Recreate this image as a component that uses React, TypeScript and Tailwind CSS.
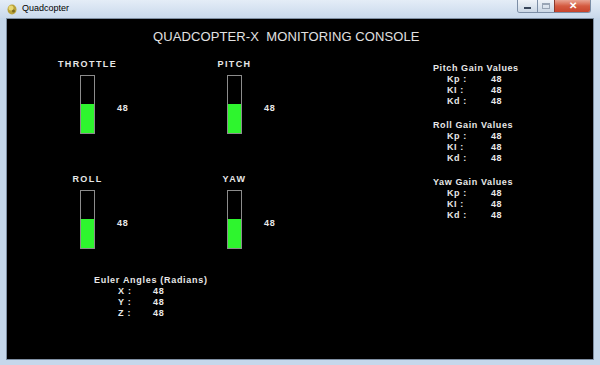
import React from "react";

const font = { fontFamily: '"Liberation Sans", Arial, sans-serif' };

function TitleBar() {
  return (
    <div className="flex h-[18px] items-start bg-gradient-to-b from-[#e4edf7] to-[#c9d9ec]">
      <div className="flex h-[18px] items-center pl-[7px]">
        <svg width="10" height="11" viewBox="0 0 10 11">
          <ellipse cx="5" cy="5.5" rx="4.5" ry="5" fill="#b9a23a" />
          <ellipse cx="4" cy="4" rx="2.5" ry="2.5" fill="#e8d873" />
          <circle cx="6.5" cy="7" r="1.5" fill="#7a6a20" />
        </svg>
        <span className="ml-[5px] text-[9px] text-black">Quadcopter</span>
      </div>
      <div className="ml-auto mr-[9px] flex h-[13px] overflow-hidden rounded-b-[3px] border border-t-0 border-[#7c8ea6]">
        <div className="flex w-[19px] items-center justify-center bg-gradient-to-b from-[#f0f4f9] to-[#cbd7e5]">
          <div className="mt-[4px] h-[2px] w-[7px] border border-[#38465a] bg-white" />
        </div>
        <div className="flex w-[17px] items-center justify-center border-l border-[#7c8ea6] bg-gradient-to-b from-[#f0f4f9] to-[#cbd7e5]">
          <div className="h-[6px] w-[8px] border border-t-2 border-[#9aa6b6]" />
        </div>
        <div className="flex w-[36px] items-center justify-center border-l border-[#8a3a2c] bg-gradient-to-b from-[#e8a493] via-[#d45a40] to-[#c8442c]">
          <span className="text-[10px] font-bold leading-none text-white">✕</span>
        </div>
      </div>
    </div>
  );
}

function Gauge({ label, value }: { label: string; value: string }) {
  return (
    <div className="grid w-[95px] grid-cols-[40px_15px_40px]">
      <div className="col-span-3 text-center text-[9px] font-bold leading-[11px] tracking-[1.4px] text-[#e8e8e8]">
        {label}
      </div>
      <div />
      <div className="mt-[5px] flex h-[59px] w-[15px] flex-col justify-end border border-[#8c8c8c] bg-black">
        <div className="h-[29px] bg-[#2ef52e]" />
      </div>
      <div className="pl-[22px] pt-[33px] text-[9px] font-bold leading-[11px] tracking-[0.8px] text-[#e8e8e8]">
        {value}
      </div>
    </div>
  );
}

function GainGroup({ title }: { title: string }) {
  const rows = [
    ["Kp :", "48"],
    ["KI :", "48"],
    ["Kd :", "48"],
  ];
  return (
    <div className="text-[9px] font-bold leading-[11px] tracking-[0.6px] text-[#e8e8e8]">
      <div>{title}</div>
      {rows.map(([k, v]) => (
        <div key={k} className="flex pl-[14px]">
          <span className="w-[44px]">{k}</span>
          <span>{v}</span>
        </div>
      ))}
    </div>
  );
}

export default function App() {
  return (
    <div
      className="flex h-[365px] w-[600px] flex-col bg-[#c5d7eb]"
      style={font}
    >
      <TitleBar />
      <div className="mx-[6px] mb-[5px] flex-1 border border-[#7f8fa3] bg-black">
        <h1 className="pl-[146px] pt-[10px] text-[13px] leading-[16px] tracking-[0.1px] text-[#e2e2e2]">
          QUADCOPTER-X&nbsp; MONITORING CONSOLE
        </h1>
        <div className="mt-[14px] flex pl-[33px]">
          <div className="w-[393px]">
            <div className="flex gap-[52px]">
              <Gauge label="THROTTLE" value="48" />
              <Gauge label="PITCH" value="48" />
            </div>
            <div className="mt-[40px] flex gap-[52px]">
              <Gauge label="ROLL" value="48" />
              <Gauge label="YAW" value="48" />
            </div>
            <div className="mt-[26px] pl-[54px] text-[9px] font-bold leading-[11px] tracking-[0.7px] text-[#e8e8e8]">
              <div>Euler Angles (Radians)</div>
              {["X :", "Y :", "Z :"].map((k) => (
                <div key={k} className="flex pl-[24px]">
                  <span className="w-[35px]">{k}</span>
                  <span>48</span>
                </div>
              ))}
            </div>
          </div>
          <div className="flex flex-col gap-[13px] pt-[4px]">
            <GainGroup title="Pitch Gain Values" />
            <GainGroup title="Roll Gain Values" />
            <GainGroup title="Yaw Gain Values" />
          </div>
        </div>
      </div>
    </div>
  );
}
